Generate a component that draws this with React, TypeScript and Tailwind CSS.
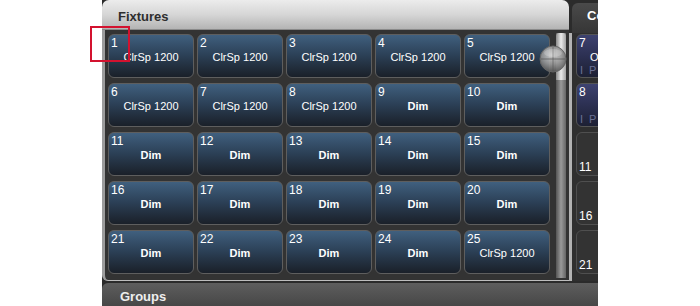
import React from "react";

const fixtures = Array.from({ length: 25 }, (_, i) => {
  const n = i + 1;
  return { n, label: n <= 8 || n === 25 ? "ClrSp 1200" : "Dim" };
});

function FixtureButton({ n, label }: { n: number; label: string }) {
  return (
    <div className="h-[44px] rounded-[6px] border border-[#5e5e5e] bg-linear-to-b from-[#40607f] via-[#2b3f55] to-[#1a2029] flex flex-col text-white overflow-hidden">
      <div className="pl-[2px] pt-[1px] text-[12px] leading-[14px]">{n}</div>
      <div className={"mt-[1px] text-center text-[11px] leading-[13px] " + (label === "Dim" ? "font-bold" : "")}>
        {label}
      </div>
    </div>
  );
}

function Knob() {
  return (
    <svg width="28" height="28" viewBox="0 0 28 28" className="absolute left-[539px] top-[45px]">
      <defs>
        <radialGradient id="kg" cx="45%" cy="35%" r="65%">
          <stop offset="0%" stopColor="#d8d8d8" />
          <stop offset="55%" stopColor="#9a9a9a" />
          <stop offset="100%" stopColor="#5a5a5a" />
        </radialGradient>
      </defs>
      <circle cx="14" cy="14" r="13" fill="url(#kg)" fillOpacity="0.9" stroke="#666" strokeWidth="1" />
      <line x1="2" y1="14" x2="26" y2="14" stroke="#555" strokeWidth="1" opacity="0.7" />
      <line x1="14" y1="2" x2="14" y2="26" stroke="#555" strokeWidth="1" opacity="0.6" />
      <ellipse cx="14" cy="8" rx="9" ry="4" fill="#fff" opacity="0.2" />
    </svg>
  );
}

export default function App() {
  return (
    <div className="relative w-[700px] h-[306px] bg-white overflow-hidden font-['Liberation_Sans',Arial,sans-serif]">
      <div className="ml-[102px] w-[496px] h-[306px] overflow-hidden bg-[#2b2b2b] flex flex-col">
        <div className="flex h-[281px]">
          {/* Fixtures panel */}
          <div className="w-[467px] flex flex-col">
            <div className="h-[30px] rounded-t-[7px] bg-linear-to-b from-[#ececec] via-[#d6d6d6] to-[#b4b4b4] border-b border-[#8a8a8a] pl-[16px] pt-[9px] text-[13px] leading-[16px] font-bold text-[#2e2e2e]">
              Fixtures
            </div>
            <div className="flex-1 flex border-l-[3px] border-b border-l-[#9c9c9c] border-b-[#bdbdbd] rounded-bl-[6px] bg-[#333333] pl-[3px] pt-[4px]">
              <div className="grid grid-cols-[repeat(5,86px)] auto-rows-[44px] gap-x-[3px] gap-y-[5px] h-fit">
                {fixtures.map((f) => (
                  <FixtureButton key={f.n} n={f.n} label={f.label} />
                ))}
              </div>
              <div className="ml-[6px] w-[10px] -mt-[1px] mb-[2px] flex flex-col bg-linear-to-r from-[#555555] via-[#9a9a9a] to-[#666666]">
                <div className="h-[47px] rounded-t-[3px] bg-linear-to-r from-[#8a8a8a] via-[#ececec] to-[#a2a2a2]" />
              </div>
            </div>
          </div>
          {/* right panel */}
          <div className="flex-1 flex flex-col overflow-hidden">
            <div className="h-[30px] mt-[3px] ml-[3px] rounded-tl-[6px] bg-linear-to-b from-[#4a4a4a] to-[#363636] pl-[15px] pt-[5px] text-[13px] leading-[16px] font-bold text-white whitespace-nowrap">
              Colours
            </div>
            <div className="flex-1 border-l-[3px] border-[#b3b3b3] bg-[#2f2f2f] pl-[4px] pt-[1px] flex flex-col gap-[5px]">
              {["7", "8"].map((n) => (
                <div key={n} className="w-[86px] h-[44px] shrink-0 rounded-[6px] border border-[#555] bg-linear-to-b from-[#3d4270] via-[#2c3052] to-[#1d2034] flex flex-col text-white">
                  <div className="pl-[2px] pt-[1px] text-[12px] leading-[14px]">{n}</div>
                  <div className="mt-[1px] text-center text-[11px] leading-[13px] whitespace-nowrap">{n === "7" ? "Open White" : ""}</div>
                  <div className="mt-auto pl-[3px] pb-[1px] text-[11px] leading-[12px] text-[#6b7195] tracking-[6px] whitespace-nowrap">IPC</div>
                </div>
              ))}
              {["11", "16", "21"].map((n) => (
                <div key={n} className="w-[86px] h-[44px] shrink-0 rounded-[6px] border border-[#4f4f4f] bg-[#333333] flex flex-col justify-end text-white">
                  <div className="pl-[2px] pb-[1px] text-[12px] leading-[14px]">{n}</div>
                </div>
              ))}
            </div>
          </div>
        </div>
        {/* Groups bar */}
        <div className="mt-[2px] flex-1 rounded-tl-[6px] bg-linear-to-b from-[#5e5e5e] to-[#474747] pl-[18px] pt-[6px] text-[13px] leading-[16px] font-bold text-[#eeeeee]">
          Groups
        </div>
      </div>
      <Knob />
      <div className="absolute left-[90px] top-[26px] w-[40px] h-[36px] border-2 border-[#d3122f]" />
    </div>
  );
}
